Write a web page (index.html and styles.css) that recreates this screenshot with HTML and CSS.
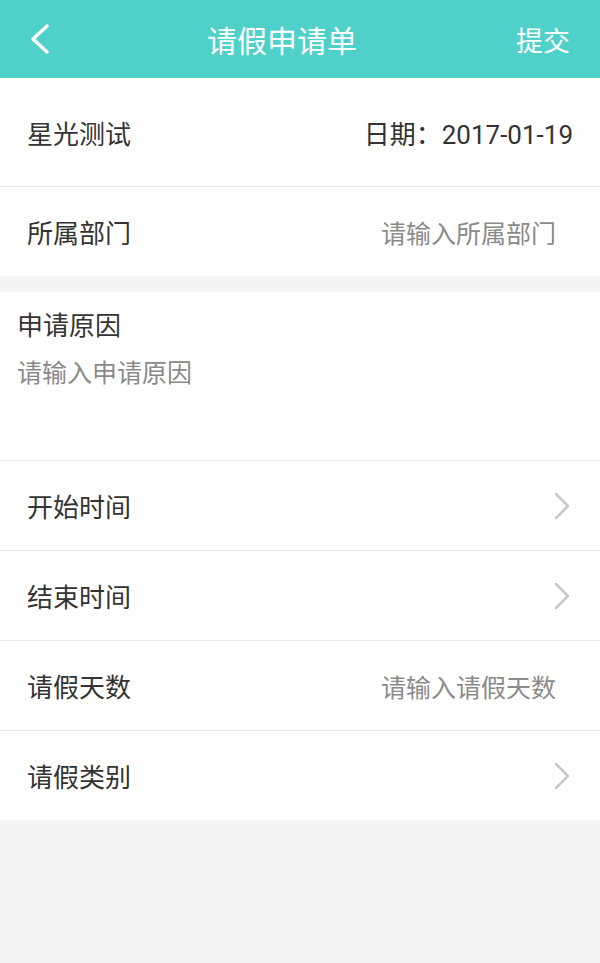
FILE: index.html
```html
<!DOCTYPE html>
<html>

	<head>
		<meta charset="UTF-8">
		<title>请假申请单</title>
		<link rel="stylesheet" href="styles.css">
	</head>

	<body>
		<div class="header">
			<span class="back">
				<svg width="24" height="32" viewBox="0 0 24 32"><polyline points="19,3 5,16 19,29" fill="none" stroke="#fff" stroke-width="3.5" stroke-linecap="round" stroke-linejoin="round"/></svg>
			</span>
			<h1 class="title">请假申请单</h1>
			<span class="submit">提交</span>
		</div>

		<div class="group">
			<div class="row row-top">
				<span class="label">星光测试</span>
				<span class="value">日期：2017-01-19</span>
			</div>
			<div class="row row-dept">
				<span class="label">所属部门</span>
				<span class="hint">请输入所属部门</span>
			</div>
		</div>

		<div class="group">
			<div class="reason">
				<p class="reason-title">申请原因</p>
				<p class="hint">请输入申请原因</p>
			</div>
			<div class="row">
				<span class="label">开始时间</span>
				<span class="arrow"><svg width="20" height="30" viewBox="0 0 20 30"><polyline points="4,3 16,15 4,27" fill="none" stroke="#c8c8c8" stroke-width="2.5" stroke-linecap="round" stroke-linejoin="round"/></svg></span>
			</div>
			<div class="row">
				<span class="label">结束时间</span>
				<span class="arrow"><svg width="20" height="30" viewBox="0 0 20 30"><polyline points="4,3 16,15 4,27" fill="none" stroke="#c8c8c8" stroke-width="2.5" stroke-linecap="round" stroke-linejoin="round"/></svg></span>
			</div>
			<div class="row">
				<span class="label">请假天数</span>
				<span class="hint">请输入请假天数</span>
			</div>
			<div class="row">
				<span class="label">请假类别</span>
				<span class="arrow"><svg width="20" height="30" viewBox="0 0 20 30"><polyline points="4,3 16,15 4,27" fill="none" stroke="#c8c8c8" stroke-width="2.5" stroke-linecap="round" stroke-linejoin="round"/></svg></span>
			</div>
		</div>
	</body>

</html>
```

FILE: styles.css
```css
* {
	margin: 0;
	padding: 0;
	box-sizing: border-box;
}

body {
	background: #f4f4f4;
	font-family: Roboto, "Noto Sans CJK SC", sans-serif;
	color: #333;
	height: 100vh;
	overflow: hidden;
}

.header {
	height: 78px;
	background: #4fd0c8;
	display: flex;
	align-items: center;
	justify-content: space-between;
	padding: 0 30px 0 28px;
	color: #fff;
}

.back {
	width: 60px;
	display: flex;
	align-items: center;
}

.title {
	font-size: 30px;
	font-weight: normal;
}

.submit {
	font-size: 27px;
	width: 94px;
	text-align: right;
}

.group {
	background: #fff;
	margin-bottom: 16px;
}

.row {
	display: flex;
	align-items: center;
	justify-content: space-between;
	height: 90px;
	padding: 0 28px 0 27px;
	border-bottom: 1px solid #e8e8e8;
	font-size: 26px;
}

.row:last-child {
	border-bottom: 0;
	height: 89px;
}

.row-top {
	height: 109px;
	padding-right: 27px;
}

.row-dept {
	height: 89px;
	padding-right: 44px;
}

.row .hint {
	margin-right: 16px;
}

.row-dept .hint {
	margin-right: 0;
}

.label {
	font-size: 26px;
}

.value {
	font-size: 26px;
	color: #333;
}

.hint {
	color: #8a8a8a;
	font-size: 25px;
}

.arrow {
	display: flex;
	align-items: center;
}

.reason {
	height: 169px;
	padding: 16px 17px 0;
	border-bottom: 1px solid #e8e8e8;
}

.reason-title {
	font-size: 26px;
	line-height: 36px;
}

.reason .hint {
	margin-top: 13px;
	line-height: 34px;
}
```
